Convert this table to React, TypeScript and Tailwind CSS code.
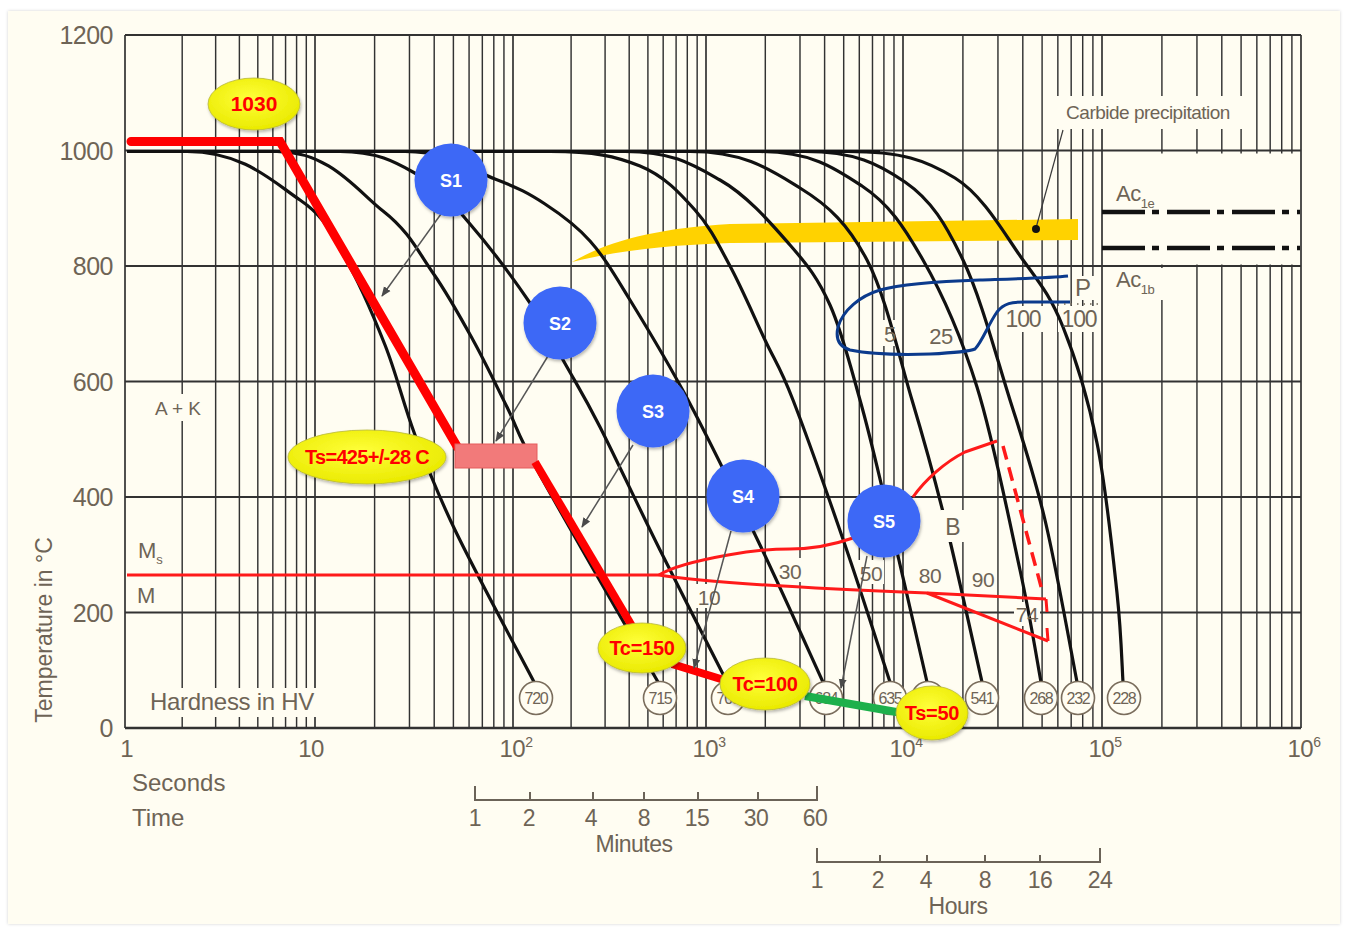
import React from "react";

const FONT = "'Liberation Sans', Arial, sans-serif";
const TXT = "#6e6456";
const CREAM = "#fffdf2";
const GRID = "#323232";

const DEC = [125, 315, 513, 706, 903, 1102, 1301];
function X(t: number): number {
  const l = Math.log10(t);
  const d = Math.floor(l + 1e-9);
  const f = l - d;
  if (d >= 6) return DEC[6];
  return DEC[d] + f * (DEC[d + 1] - DEC[d]);
}
const Y = (T: number) => 728 - T * 0.5775;

function curvePath(pts: number[][]): string {
  let d = `M${pts[0][0]} ${pts[0][1]}`;
  for (let i = 0; i < pts.length - 1; i++) {
    const p0 = i === 0 ? [pts[0][0] - 80, pts[0][1]] : pts[i - 1];
    const p1 = pts[i];
    const p2 = pts[i + 1];
    const p3 = pts[i + 2] || p2;
    let c1x = p1[0] + (p2[0] - p0[0]) / 6;
    let c1y = p1[1] + (p2[1] - p0[1]) / 6;
    if (i === 0) {
      c1x = p1[0] + (p2[0] - p1[0]) * 0.5;
      c1y = p1[1];
    }
    const c2x = p2[0] - (p3[0] - p1[0]) / 6;
    const c2y = p2[1] - (p3[1] - p1[1]) / 6;
    d += ` C${c1x.toFixed(1)} ${c1y.toFixed(1)} ${c2x.toFixed(1)} ${c2y.toFixed(1)} ${p2[0]} ${p2[1]}`;
  }
  return d;
}

const CURVES: number[][][] = [
  [[187, 151.5], [300, 200], [345, 258], [385, 345], [415, 435], [455, 530], [534, 682]],
  [[277, 151.5], [383, 211], [433, 273], [473, 340], [507, 407], [540, 475], [658, 682]],
  [[340, 151.5], [420, 176], [470, 224], [530, 303], [567, 367], [600, 427], [660, 550], [727, 682]],
  [[405, 151.5], [495, 179], [545, 204], [590, 241], [630, 300], [688, 400], [760, 545], [823, 682]],
  [[550, 151.5], [640, 166], [695, 210], [730, 266], [765, 340], [793, 400], [845, 545], [890, 682]],
  [[625, 151.5], [720, 180], [790, 245], [830, 305], [860, 400], [885, 500], [927, 682]],
  [[690, 151.5], [800, 188], [867, 260], [912, 400], [945, 520], [982, 682]],
  [[760, 151.5], [862, 186], [923, 260], [977, 387], [1020, 570], [1041, 682]],
  [[805, 151.5], [905, 182], [963, 260], [1010, 400], [1045, 520], [1077, 682]],
  [[848, 151.5], [955, 178], [1023, 260], [1063, 327], [1097, 443], [1117, 593], [1123, 682]],
];

const HARD: [number, string][] = [
  [536, "720"], [660, "715"], [728, "705"], [826, "684"], [890, "635"], [928, ""],
  [982, "541"], [1041, "268"], [1078, "232"], [1124, "228"],
];

const GAPS: number[][] = [
  [145, 688, 180, 29],
  [150, 394, 57, 27],
  [1052, 96, 190, 33],
  [1104, 153.5, 195, 111],
  [1112, 268, 60, 32],
  [1072, 276, 22, 24],
  [1002, 306, 43, 26],
  [1058, 306, 42, 26],
  [882, 320, 16, 26],
  [925, 322, 32, 26],
  [696, 584, 26, 24],
  [777, 558, 26, 24],
  [858, 560, 26, 24],
  [917, 562, 26, 24],
  [970, 566, 26, 24],
  [1014, 602, 26, 24],
];

const BLUE: [number, number, string][] = [
  [451, 180, "S1"], [560, 323, "S2"], [653, 411, "S3"], [743, 496, "S4"], [884, 521, "S5"],
];

const ARROWS: number[][] = [
  [441, 214, 382, 296],
  [548, 356, 496, 441],
  [633, 445, 582, 527],
  [731, 531, 694, 668],
  [867, 556, 841, 688],
];

const YELLOW: [number, number, number, number, string, number, number][] = [
  [254, 104, 46, 26, "1030", 21, 0],
  [367, 457, 79, 27, "Ts=425+/-28 C", 20, -0.7],
  [642, 648, 44, 25, "Tc=150", 20, -0.3],
  [765, 684, 45, 26, "Tc=100", 20, -0.3],
  [932, 713, 36, 27, "Ts=50", 20, -0.3],
];

function Label({ x, y, children, size = 22, anchor = "middle", ls = 0 }: { x: number; y: number; children: React.ReactNode; size?: number; anchor?: "start" | "middle" | "end"; ls?: number }) {
  return (
    <text x={x} y={y} fontSize={size} fill={TXT} textAnchor={anchor} fontFamily={FONT} letterSpacing={ls}>
      {children}
    </text>
  );
}

export default function App() {
  const vlines: number[] = [];
  for (let d = 0; d < 6; d++) for (let m = 1; m <= 9; m++) vlines.push(X(m * Math.pow(10, d)));
  vlines.push(DEC[6]);

  return (
    <div className="w-[1350px] h-[931px] bg-white pt-[11px] pl-[8px]">
      <div className="w-[1332px] h-[913px] bg-[#fffdf2] shadow-[0_0_3px_rgba(0,0,0,0.18)]">
        <svg width={1332} height={913} viewBox="8 11 1332 913" className="block">
          <defs>
            <radialGradient id="yg" cx="45%" cy="40%" r="60%">
              <stop offset="0%" stopColor="#ffff3a" />
              <stop offset="100%" stopColor="#eaea00" />
            </radialGradient>
            <filter id="sh" x="-20%" y="-20%" width="140%" height="150%">
              <feDropShadow dx="1" dy="2" stdDeviation="1.6" floodColor="#000" floodOpacity="0.28" />
            </filter>
            <marker id="ah" viewBox="0 0 10 10" refX="9" refY="5" markerWidth="10" markerHeight="10" orient="auto-start-reverse" markerUnits="userSpaceOnUse">
              <path d="M0 1 L10 5 L0 9 Z" fill="#4a4a4a" />
            </marker>
          </defs>

          {/* grid */}
          {vlines.map((x, i) => (
            <line key={"v" + i} x1={x} y1={35} x2={x} y2={728} stroke={GRID} strokeWidth={i % 9 === 0 ? 1.7 : 1.45} />
          ))}
          {[0, 200, 400, 600, 800, 1000, 1200].map((T) => (
            <line key={"h" + T} x1={125} y1={Y(T)} x2={1301} y2={Y(T)} stroke={GRID} strokeWidth={T === 0 ? 2.4 : 2} />
          ))}

          {/* gaps behind labels */}
          {GAPS.map((g, i) => (
            <rect key={"g" + i} x={g[0]} y={g[1]} width={g[2]} height={g[3]} fill={CREAM} />
          ))}

          {/* axis labels */}
          {[0, 200, 400, 600, 800, 1000, 1200].map((T) => (
            <Label key={"yl" + T} x={113} y={Y(T) + 9} size={25} anchor="end" ls={-0.5}>
              {T}
            </Label>
          ))}
          <Label x={127} y={757} size={24}>1</Label>
          <Label x={311} y={757} size={24} ls={-0.5}>10</Label>
          {[2, 3, 4, 5, 6].map((d) => (
            <text key={"xl" + d} x={DEC[d] + 3} y={757} fontSize={24} fill={TXT} textAnchor="middle" fontFamily={FONT} letterSpacing={-0.5}>
              10<tspan dy={-10} fontSize={14}>{d}</tspan>
            </text>
          ))}
          <text x={0} y={0} fontSize={23} fill={TXT} fontFamily={FONT} textAnchor="middle" transform="translate(52 630) rotate(-90)">
            Temperature in °C
          </text>
          <Label x={132} y={791} size={24} anchor="start">Seconds</Label>
          <Label x={132} y={826} size={24} anchor="start">Time</Label>
          <Label x={150} y={710} size={24} anchor="start" ls={-0.3}>Hardness in HV</Label>
          <Label x={178} y={415} size={19}>A + K</Label>
          <text x={138} y={558} fontSize={22} fill={TXT} fontFamily={FONT}>
            M<tspan dy={6} fontSize={13}>s</tspan>
          </text>
          <Label x={137} y={603} size={22} anchor="start">M</Label>

          {/* minutes / hours scales */}
          <g stroke="#6b6358" strokeWidth={2} fill="none">
            <path d="M475 786 L475 800 L817 800 L817 786" />
            {[530, 593, 644, 698, 758].map((x) => (
              <line key={"mt" + x} x1={x} y1={792} x2={x} y2={800} />
            ))}
            <path d="M817 848 L817 862 L1100 862 L1100 848" />
            {[880, 927, 985, 1040].map((x) => (
              <line key={"ht" + x} x1={x} y1={855} x2={x} y2={862} />
            ))}
          </g>
          {[[475, "1"], [529, "2"], [591, "4"], [644, "8"], [697, "15"], [756, "30"], [815, "60"]].map(([x, t]) => (
            <Label key={"ml" + t} x={x as number} y={826} size={23} ls={-0.5}>{t}</Label>
          ))}
          <Label x={634} y={852} size={23} ls={-0.5}>Minutes</Label>
          {[[817, "1"], [878, "2"], [926, "4"], [985, "8"], [1040, "16"], [1100, "24"]].map(([x, t]) => (
            <Label key={"hl" + t} x={x as number} y={888} size={23} ls={-0.5}>{t}</Label>
          ))}
          <Label x={958} y={914} size={23} ls={-0.5}>Hours</Label>

          {/* carbide precipitation band */}
          <path d="M572 262 C610 240 660 228 730 224 L1078 219 L1078 240 L730 243 C670 245 620 250 572 262 Z" fill="#ffd200" />
          <Label x={1148} y={119} size={19} ls={-0.5}>Carbide precipitation</Label>
          <line x1={1063} y1={130} x2={1036} y2={228} stroke="#3a3a3a" strokeWidth={1.2} />
          <circle cx={1036} cy={229} r={4} fill="#111" />

          {/* Ac lines */}
          <g stroke="#111" strokeWidth={4.5} strokeDasharray="43 7 7 8" fill="none">
            <line x1={1102} y1={212} x2={1300} y2={212} />
            <line x1={1102} y1={248} x2={1300} y2={248} />
          </g>
          <text x={1116} y={201} fontSize={22} fill={TXT} fontFamily={FONT} letterSpacing={-0.5}>
            Ac<tspan dy={7} fontSize={13}>1e</tspan>
          </text>
          <text x={1116} y={287} fontSize={22} fill={TXT} fontFamily={FONT} letterSpacing={-0.5}>
            Ac<tspan dy={7} fontSize={13}>1b</tspan>
          </text>

          {/* cooling curves */}
          <line x1={127} y1={151.5} x2={880} y2={151.5} stroke="#111" strokeWidth={3} />
          {CURVES.map((c, i) => (
            <path key={"c" + i} d={curvePath(c)} stroke="#111" strokeWidth={3.2} fill="none" />
          ))}

          {/* pearlite region */}
          <path
            d="M1068 276 C1050 278 1010 279 980 280 C950 281 905 283 880 290 C860 296 843 310 838 327 C835 340 840 347 850 350 C870 354 900 355 930 354 C950 353 968 352 975 349 C982 342 988 325 997 312 C1004 303 1012 302 1025 302 L1070 302"
            stroke="#0b3a8c"
            strokeWidth={3}
            fill="none"
          />
          <Label x={890} y={342} size={22}>5</Label>
          <Label x={941} y={344} size={22} ls={-0.5}>25</Label>
          <Label x={1023} y={327} size={23} ls={-1.2}>100</Label>
          <Label x={1079} y={327} size={23} ls={-1.2}>100</Label>
          <Label x={1083} y={296} size={24}>P</Label>
          <line x1={1064} y1={304} x2={1098} y2={304} stroke="#6e6456" strokeWidth={1.5} strokeDasharray="1.5 5" />

          {/* labels among curves */}
          <rect x={941} y={510} width={24} height={32} fill={CREAM} />
          <Label x={953} y={535} size={23}>B</Label>
          <Label x={709} y={605} size={21} ls={-0.5}>10</Label>
          <Label x={790} y={579} size={21} ls={-0.5}>30</Label>
          <Label x={871} y={581} size={21} ls={-0.5}>50</Label>
          <Label x={930} y={583} size={21} ls={-0.5}>80</Label>
          <Label x={983} y={587} size={21} ls={-0.5}>90</Label>
          <Label x={1027} y={622} size={21} ls={-0.5}>74</Label>

          {/* hardness circles */}
          {HARD.map(([x, t]) => (
            <g key={"hc" + x}>
              <circle cx={x} cy={698} r={16.5} fill={CREAM} stroke="#7a6d5c" strokeWidth={1.6} />
              {t && (
                <text x={x} y={704} fontSize={16} fill={TXT} textAnchor="middle" fontFamily={FONT} letterSpacing={-1.3}>
                  {t}
                </text>
              )}
            </g>
          ))}

          {/* red thin lines */}
          <g stroke="#ff1a1a" strokeWidth={3} fill="none" strokeLinejoin="round">
            <path d="M127 575 L659 575" />
            <path d="M659 575 C672 567 700 560 728 555 C755 550 770 549 790 549 C810 549 830 546 853 538" />
            <path d="M913 497 C925 480 945 462 965 452 L997 441" />
            <path d="M659 575 C700 582 800 588 927 593 L1046 599" />
            <path d="M927 593 L1048 641" />
            <path d="M1046 599 L1047 612 M1047 628 L1048 641" />
            <path d="M1003 446 L1042 590" strokeWidth={3.5} strokeDasharray="14 8" />
          </g>

          {/* thick path */}
          <path d="M131 141.5 L280 141.5 L458 448" stroke="#ff0000" strokeWidth={9} fill="none" strokeLinecap="round" strokeLinejoin="miter" />
          <rect x={455} y={444} width={82} height={24} fill="#f27a7a" stroke="#e55d5d" strokeWidth={1} />
          <path d="M535 462 L632 626" stroke="#ff0000" strokeWidth={8} fill="none" />
          <path d="M640 640 L650 652" stroke="#ff0000" strokeWidth={8} fill="none" />
          <path d="M672 664 L724 680" stroke="#ff0000" strokeWidth={8} fill="none" />
          <path d="M805 696 L902 713" stroke="#1db04b" strokeWidth={8} fill="none" />

          {/* arrows */}
          {ARROWS.map((a, i) => (
            <line key={"a" + i} x1={a[0]} y1={a[1]} x2={a[2]} y2={a[3]} stroke="#555" strokeWidth={1.5} markerEnd="url(#ah)" />
          ))}

          {/* blue circles */}
          {BLUE.map(([x, y, t]) => (
            <g key={t}>
              <circle cx={x} cy={y} r={36.5} fill="#3d67f6" filter="url(#sh)" />
              <text x={x} y={y + 6.5} fontSize={18} fontWeight="bold" fill="#fff" textAnchor="middle" fontFamily={FONT}>
                {t}
              </text>
            </g>
          ))}

          {/* yellow labels */}
          {YELLOW.map(([x, y, rx, ry, t, fs, ls]) => (
            <g key={t}>
              <ellipse cx={x} cy={y} rx={rx} ry={ry} fill="url(#yg)" stroke="#b8b83a" strokeWidth={0.8} filter="url(#sh)" />
              <text x={x} y={y + 7} fontSize={fs} fontWeight="bold" fill="#ff0000" textAnchor="middle" fontFamily={FONT} letterSpacing={ls}>
                {t}
              </text>
            </g>
          ))}
        </svg>
      </div>
    </div>
  );
}
